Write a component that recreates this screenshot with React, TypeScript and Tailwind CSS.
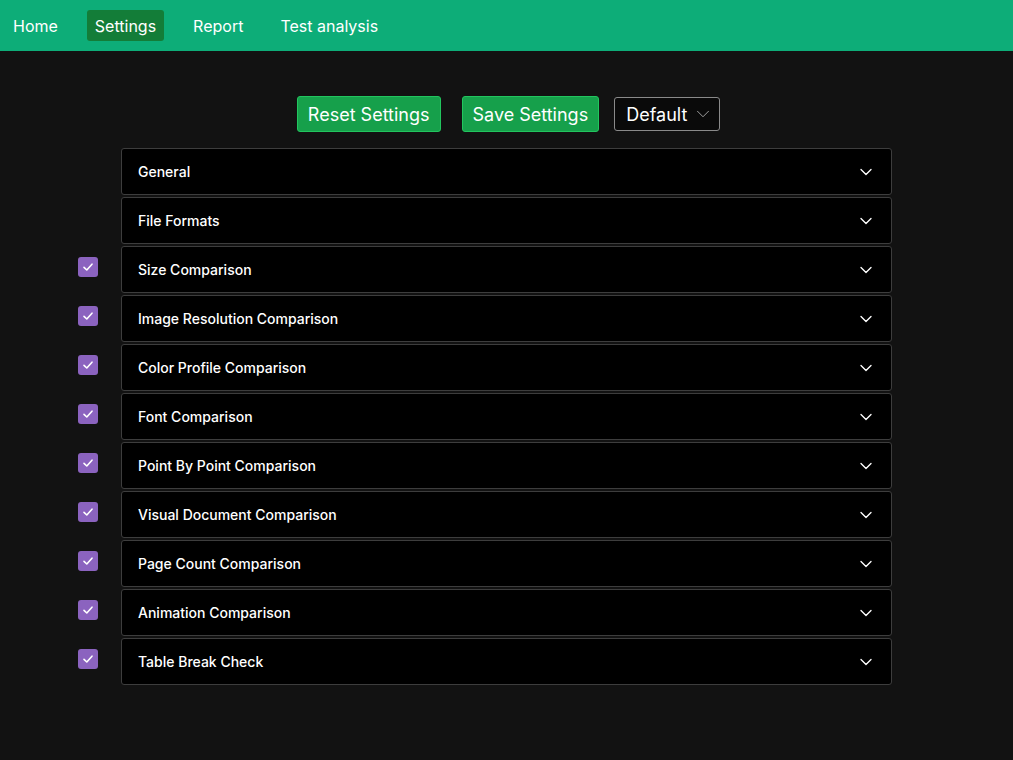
import { ChevronDown } from 'lucide-react'

const sections = [
  { name: 'General', check: false },
  { name: 'File Formats', check: false },
  { name: 'Size Comparison', check: true },
  { name: 'Image Resolution Comparison', check: true },
  { name: 'Color Profile Comparison', check: true },
  { name: 'Font Comparison', check: true },
  { name: 'Point By Point Comparison', check: true },
  { name: 'Visual Document Comparison', check: true },
  { name: 'Page Count Comparison', check: true },
  { name: 'Animation Comparison', check: true },
  { name: 'Table Break Check', check: true },
]

function Check() {
  return (
    <div className="w-5 h-5 rounded-[3px] bg-[#8b63bf] flex items-center justify-center">
      <svg width="12" height="12" viewBox="0 0 12 12" fill="none">
        <path d="M2 6.3 L4.8 9 L10 3.2" stroke="white" strokeWidth="1.6" strokeLinecap="round" strokeLinejoin="round" />
      </svg>
    </div>
  )
}

export default function App() {
  return (
    <div className="min-h-[760px] bg-[#121212] text-white" style={{ fontFamily: 'Inter, "Noto Sans", sans-serif' }}>
      <nav className="h-[51px] bg-[#0dad78] flex items-center px-[5px] gap-[21px] text-[16px]">
        {['Home', 'Settings', 'Report', 'Test analysis'].map(n => (
          <div
            key={n}
            className={`h-[31px] px-[8px] flex items-center rounded-[3px] ${n === 'Settings' ? 'bg-[#137d38]' : ''}`}
          >
            {n}
          </div>
        ))}
      </nav>

      <div className="flex justify-center items-center gap-[21px] pt-[45px] pl-[4px]">
        <button className="h-[36px] px-[10px] rounded-[3px] bg-[#16a04b] border border-[#22c55e] text-[18px]">
          Reset Settings
        </button>
        <div className="flex items-center gap-[15px]">
          <button className="h-[36px] px-[10px] rounded-[3px] bg-[#16a04b] border border-[#22c55e] text-[18px]">
            Save Settings
          </button>
          <div className="h-[34px] w-[106px] pl-[11px] pr-[5px] rounded-[3px] bg-[#0a0a0a] border border-[#8a8a8a] flex items-center justify-between text-[18px]">
            <span>Default</span>
            <ChevronDown size={22} strokeWidth={0.9} className="text-[#bbb]" />
          </div>
        </div>
      </div>

      <div className="flex flex-col gap-[2px] mt-[16px] w-[814px] ml-[78px]">
        {sections.map(s => (
          <div key={s.name} className="flex items-start">
            <div className="w-[43px] flex-none pt-[11px]">{s.check && <Check />}</div>
            <div className="flex-1 h-[47px] bg-black border border-[#3d3d3d] rounded-[3px] flex items-center justify-between pl-[16px] pr-[15px]">
              <span className="text-[14px] font-[450]">{s.name}</span>
              <ChevronDown size={20} strokeWidth={1.6} />
            </div>
          </div>
        ))}
      </div>
    </div>
  )
}
